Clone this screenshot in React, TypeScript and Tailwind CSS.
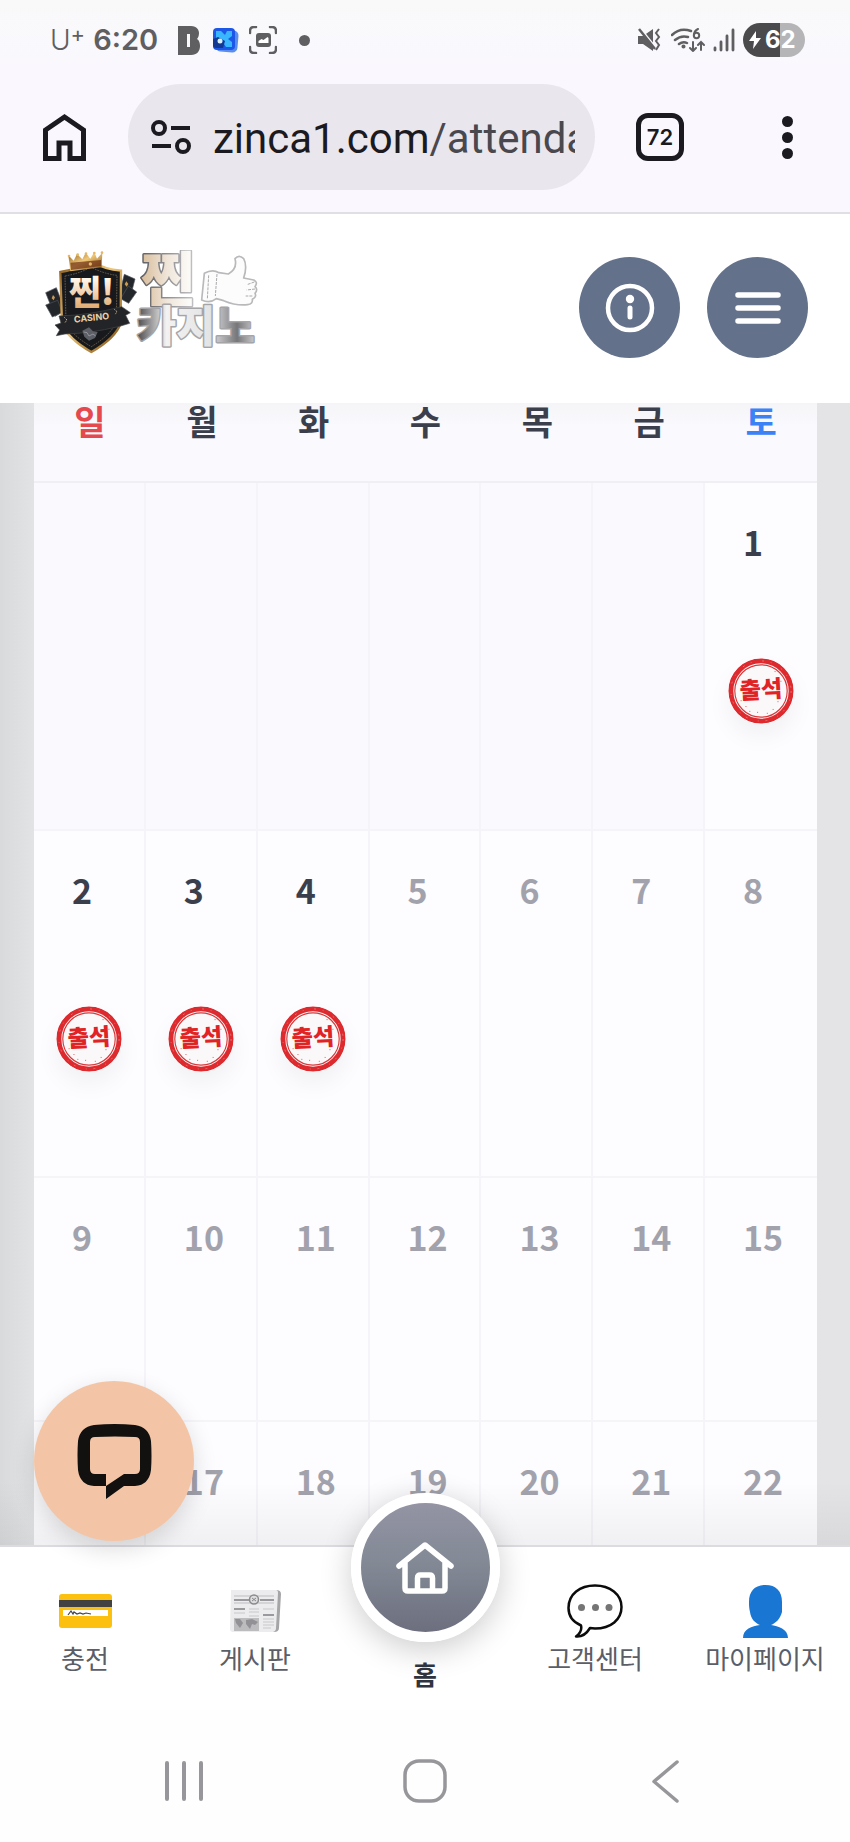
import React from 'react';

interface DayCell {
    day: number | null;
    state: 'empty' | 'past' | 'future';
    attended?: boolean;
}

interface WeekRow {
    height: string;
    days: DayCell[];
}

const WEEKDAYS = [
    { label: '일', color: 'text-[#e5484d]' },
    { label: '월', color: 'text-[#3b3f4c]' },
    { label: '화', color: 'text-[#3b3f4c]' },
    { label: '수', color: 'text-[#3b3f4c]' },
    { label: '목', color: 'text-[#3b3f4c]' },
    { label: '금', color: 'text-[#3b3f4c]' },
    { label: '토', color: 'text-[#3b82f6]' },
];

const LAST_ATTENDED = 4;

const makeWeek = (first: number, height: string): WeekRow => ({
    height,
    days: Array.from({ length: 7 }, (_, i) => {
        const day = first + i;
        if (day < 1) return { day: null, state: 'empty' };
        return { day, state: day <= LAST_ATTENDED ? 'past' : 'future', attended: day <= LAST_ATTENDED };
    }),
});

const WEEKS: WeekRow[] = [
    makeWeek(-5, 'h-[348px]'),
    makeWeek(2, 'h-[347px]'),
    makeWeek(9, 'h-[244px]'),
    makeWeek(16, 'h-[123px]'),
];

const StatusBar = () => (
    <div className="flex h-[84px] items-center justify-between pr-[45px] pb-1 pl-[50px] text-[#5f5f62]">
        <div className="flex items-center">
            <span className="font-['Inter',sans-serif] text-[28px] leading-8 font-light">U</span>
            <span className="mb-3 font-['Inter',sans-serif] text-[22px] leading-6 font-normal">+</span>
            <span className="ml-2 font-['Inter',sans-serif] text-[29px] leading-8 font-semibold">6:20</span>
            <svg className="ml-5 h-[29px] w-[22px]" viewBox="0 0 22 29" fill="currentColor" aria-hidden="true">
                <path fillRule="evenodd" d="M0 0h13c6 0 8 4 8 7 0 3-1 5-2 6 2 1 3 4 3 7 0 5-3 9-9 9H0zM9 8v13h3V8z" />
            </svg>
            <svg className="ml-3 h-[26px] w-[27px]" viewBox="0 0 27 26" aria-hidden="true">
                <rect x="4" y="3" width="22" height="22" rx="5" fill="#5b8def" transform="rotate(5 15 14)" />
                <rect x="1" y="1" width="22" height="22" rx="4" fill="#1d57e8" />
                <path d="M4 4h5l4 4 2-4h5v5l-4 3 4 3v5h-6l-4-6-6-3z" fill="#38b6ff" />
                <path d="M1 12l5-2 7 4-2 7H4q-3 0-3-3z" fill="#123a94" />
                <circle cx="8" cy="14" r="2.5" fill="#d8f1ff" />
            </svg>
            <svg className="ml-2.5 h-7 w-7" viewBox="0 0 28 28" fill="none" aria-hidden="true">
                <path d="M1 7V5q0-4 4-4h2M21 1h2q4 0 4 4v2M27 21v2q0 4-4 4h-2M7 27H5q-4 0-4-4v-2" stroke="currentColor" strokeWidth="2.5" strokeLinecap="round" />
                <rect x="7" y="7" width="15" height="14" rx="3" fill="currentColor" />
                <path d="M9.500 17v-2l3-2 2 1 4-3 1 1v5z" fill="#fff" />
            </svg>
            <span className="ml-[22px] size-[11px] rounded-full bg-[#5f5f62]" />
        </div>
        <div className="flex items-center">
            <svg className="h-6 w-6" viewBox="0 0 24 24" aria-hidden="true">
                <path d="M1 8h5l10-7v22L6 16H1z" fill="currentColor" />
                <path d="M4 1l16 20" stroke="#fafafe" strokeWidth="2" />
                <path d="M2 1l16 20" stroke="currentColor" strokeWidth="2.500" />
                <path d="M22 1l-3 4 3 4-3 4 3 4-3 5" fill="none" stroke="currentColor" strokeWidth="2" />
            </svg>
            <svg className="ml-2.5 h-6 w-[34px]" viewBox="0 0 34 24" fill="none" stroke="currentColor" strokeWidth="2.500" strokeLinecap="round" aria-hidden="true">
                <path d="M1 7Q9-1 20 3M4 12q6-5 13-3M8 16q4-3 8-1" />
                <circle cx="12.500" cy="18.500" r=".8" fill="currentColor" />
                <path d="M27 1q-4 2-4 6" strokeWidth="2" />
                <circle cx="25.500" cy="7.500" r="2.700" strokeWidth="2" />
                <path d="M22 14v9m-3-3 3 3 3-3M30 22v-8m-3 3 3-3 3 3" strokeWidth="2" />
            </svg>
            <svg className="ml-2 h-6 w-[22px]" viewBox="0 0 22 24" stroke="currentColor" strokeWidth="2.800" strokeLinecap="round" aria-hidden="true">
                <path d="M2 20v2M8 14v8M14 8v14M20 2v20" />
            </svg>
            <div className="ml-2 flex h-[34px] w-[62px] items-center overflow-hidden rounded-full bg-linear-to-r from-[#4a4a4d] from-60% to-[#b5b5b8] to-60% pl-1.5 text-white">
                <svg className="h-[18px] w-3" viewBox="0 0 12 18" fill="currentColor" aria-hidden="true"><path d="M7 0 0 10h5l-1 8 8-11H7z" /></svg>
                <span className="ml-1 font-['Inter',sans-serif] text-[24px] leading-8 font-bold">62</span>
            </div>
        </div>
    </div>
);

const BrowserBar = () => (
    <div className="flex items-center border-b-2 border-[#dfdfe4] pr-[57px] pb-[22px] pl-[43px] text-[#1b1a20]">
        <button type="button" aria-label="Home" className="shrink-0">
            <svg className="h-12 w-[43px]" viewBox="43 113 43 48" fill="none" stroke="currentColor" strokeWidth="5">
                <path d="M45.500 158.500V130L64.500 117 83.500 130v28.500H70V143H59v15.500z" />
            </svg>
        </button>
        <button type="button" className="ml-[42px] flex h-[106px] min-w-0 flex-1 items-center rounded-full bg-[#e9e7ed] pr-5 pl-[22px]">
            <svg className="h-9 w-[42px] shrink-0" viewBox="0 0 42 36" fill="none" stroke="currentColor" strokeWidth="4" aria-hidden="true">
                <circle cx="9" cy="9" r="6" />
                <circle cx="33" cy="27" r="6" />
                <path d="M21 9h19M2 27h19" />
            </svg>
            <span className="ml-[21px] min-w-0 flex-1 overflow-hidden pt-1 text-left font-['Roboto',sans-serif] text-[42px] leading-[52px] whitespace-nowrap">
                zinca1.com<span className="text-[#4a484f]">/attenda</span>
            </span>
        </button>
        <button type="button" aria-label="Tabs" className="ml-[41px] flex size-12 shrink-0 items-center justify-center rounded-xl border-[5px] border-[#1b1a20] font-['Inter',sans-serif] text-[22px] leading-6 font-semibold">
            72
        </button>
        <button type="button" aria-label="Menu" className="ml-[98px] flex shrink-0 flex-col gap-[5px]">
            <span className="size-[11px] rounded-full bg-[#1b1a20]" />
            <span className="size-[11px] rounded-full bg-[#1b1a20]" />
            <span className="size-[11px] rounded-full bg-[#1b1a20]" />
        </button>
    </div>
);

const Logo = () => (
    <svg className="h-[105px] w-[213px]" viewBox="134 120 639 315" role="img" aria-label="찐카지노">
        <defs>
            <linearGradient id="gold" x1="0" y1="0" x2="1" y2="1">
                <stop offset="0" stopColor="#8a5a1c" />
                <stop offset=".45" stopColor="#f0c878" />
                <stop offset="1" stopColor="#7a4a10" />
            </linearGradient>
            <linearGradient id="cream" x1="0" y1="0" x2="0" y2="1">
                <stop offset=".3" stopColor="#fff6ea" />
                <stop offset="1" stopColor="#d99a55" />
            </linearGradient>
            <linearGradient id="sand" x1="0" y1="0" x2="1" y2="0">
                <stop offset="0" stopColor="#d8bd9b" />
                <stop offset=".5" stopColor="#f0e6da" />
                <stop offset="1" stopColor="#fff" />
            </linearGradient>
            <linearGradient id="steel" x1="0" y1="0" x2="1" y2="0">
                <stop offset="0" stopColor="#4b4b4e" />
                <stop offset=".25" stopColor="#f2f2f2" />
                <stop offset=".62" stopColor="#e4e4e4" />
                <stop offset=".85" stopColor="#77777a" />
                <stop offset="1" stopColor="#c9c9cb" />
            </linearGradient>
            <linearGradient id="edge" x1="0" y1="0" x2="1" y2="0">
                <stop offset="0" stopColor="#5f5f63" />
                <stop offset="1" stopColor="#c4c4c8" />
            </linearGradient>
        </defs>
        {/* cards behind the shield */}
        <g fill="#23272b" stroke="#50555a" strokeWidth="2">
            <path d="M136 248l32-15 26 68-30 18z" />
            <path d="M136 285l36-14 14 36-30 14z" />
            <path d="M372 193l32 14-16 62-32-12z" />
            <path d="M384 228l25 18-24 34-24-14z" />
        </g>
        <path d="M158 255l6 7-4 9-6-6zM378 214l6 8-5 8-6-7z" fill="#c99a52" />
        <path d="M180 186q50-7 92-32 42 25 90 28l-1 158q-16 45-88 86-70-40-88-84z" fill="#17191c" stroke="url(#gold)" strokeWidth="7" />
        <path d="M194 198q46-8 78-27 36 20 78 25l-2 140q-16 38-75 74-60-35-76-72z" fill="none" stroke="#8f7c5d" strokeWidth="2" strokeDasharray="5 3" />
        <path d="M204 136l16 16 10-20 16 16 10-20 14 18 12-20 8 20 16-18-2 44-94 12z" fill="url(#gold)" />
        <path d="M210 158l92-8v18l-90 12z" fill="#6e2f12" opacity=".7" />
        <g fill="#e3b765"><circle cx="206" cy="138" r="4" /><circle cx="232" cy="134" r="4" /><circle cx="257" cy="131" r="4" /><circle cx="282" cy="129" r="4" /><circle cx="305" cy="128" r="4" /><circle cx="270" cy="162" r="5" /></g>
        <text x="206" y="284" fontFamily="'Noto Sans CJK KR', sans-serif" fontWeight="900" fontSize="104" fill="url(#cream)">찐!</text>
        <path d="M176 318q90-2 188-28l26 18-14 8 12 24-34 10q-84 20-160 22l-26 5 10-17-14-15 18-6z" fill="#222427" stroke="#44474a" strokeWidth="2" />
        <text x="222" y="338" transform="rotate(-6 222 338)" fontFamily="'Inter', sans-serif" fontWeight="700" fontSize="27" fill="#e9cfa5">CASINO</text>
        <path d="M192 322l8 8-7 9M342 298l8 7-6 9" fill="none" stroke="#d3b68c" strokeWidth="3" strokeDasharray="4 3" />
        <path d="M246 362l20-10 12 12 14 2-8 18-18 8-14-12z" fill="#5d6066" />
        <path d="M250 366l10 2 6 10 12-6 8 6" fill="none" stroke="#a9adb3" strokeWidth="2" />

        <g fontFamily="'Noto Sans CJK KR', sans-serif" fontWeight="900" strokeLinejoin="round" paintOrder="stroke">
            <text x="422" y="274" fontSize="176" fill="url(#sand)" stroke="url(#edge)" strokeWidth="9">찐</text>
            <text x="410" y="397" fontSize="128" fill="url(#steel)" stroke="#a5a5a8" strokeWidth="9">카지노</text>
        </g>
        <path d="M612 190q24-14 44-2l28 4q28-16 20-46 12-14 26 0 12 22 0 58l30 6q14 6 4 20 10 8 0 20 6 10-8 18 2 14-14 16-34 4-72-12l-22-6q-20 16-44 4z" fill="#fcfcfc" stroke="#b9b9bc" strokeWidth="5" strokeLinejoin="round" />
        <path d="M625 196l-4 72M650 192l-5 66M762 216l-22 8M764 237l-25 3M756 258l-20 0" fill="none" stroke="#aaaaad" strokeWidth="3" strokeDasharray="9 3" />
    </svg>
);

const SiteHeader = () => (
    <header className="flex h-[189px] items-center justify-between bg-white pr-[42px] pb-0.5 pl-[45px]">
        <a href="#home" className="mb-2.5 block"><Logo /></a>
        <div className="flex gap-[27px]">
            <button type="button" aria-label="안내" className="flex size-[101px] items-center justify-center rounded-full bg-[#64718a] text-white">
                <svg className="size-[50px]" viewBox="0 0 50 50" fill="none" stroke="currentColor" strokeLinecap="round">
                    <circle cx="25" cy="25" r="22" strokeWidth="4.500" />
                    <circle cx="25" cy="16" r="4.200" fill="currentColor" stroke="none" />
                    <path d="M25 25v9" strokeWidth="5" />
                </svg>
            </button>
            <button type="button" aria-label="메뉴" className="flex size-[101px] items-center justify-center rounded-full bg-[#64718a] text-white">
                <svg className="h-8 w-[46px]" viewBox="0 0 46 32" stroke="currentColor" strokeWidth="5.500" strokeLinecap="round">
                    <path d="M3 3h40M3 16h40M3 29h40" />
                </svg>
            </button>
        </div>
    </header>
);

const Stamp = () => (
    <svg className="size-[66px] rounded-full shadow-[0_12px_24px_rgba(0,0,0,0.05)]" viewBox="0 0 68 68" role="img" aria-label="출석">
        <circle cx="34" cy="34" r="31" fill="#faf8f8" stroke="#dc2a2e" strokeWidth="5" />
        <circle cx="34" cy="34" r="31" fill="none" stroke="#ec7476" strokeWidth="1" strokeDasharray="2 7 1 11" />
        <circle cx="34" cy="34" r="27" fill="none" stroke="#d9383b" strokeWidth="1.200" />
        <path d="M48 14h1M54 24h1M13 44h1M18 50h1M30 56h1M46 53h1M51 45h1M22 55h1M40 57h1" stroke="#e25a5c" strokeWidth="1" />
        <text x="34" y="41" textAnchor="middle" transform="rotate(-3 34 34)" fontFamily="'Noto Sans CJK KR', sans-serif" fontWeight="900" fontSize="24" fill="#e02426">출석</text>
    </svg>
);

const AttendanceCalendar = () => (
    <main className="relative bg-linear-to-r from-[#d8dadc] via-[#e2e3e5] via-4% to-[#e4e4e7] pr-[33px] pl-[34px]">
        <table className="w-full table-fixed border-separate border-spacing-0 bg-[#fdfcfe]">
            <thead>
                <tr className="h-[79px] bg-linear-to-b from-[#f5f5f8] to-[#fafafe] to-30%">
                    {WEEKDAYS.map(w => (
                        <th key={w.label} scope="col" className={`border-b-2 border-[#f0f0f4] pb-[42px] text-center text-[34px] leading-9 font-bold ${w.color}`}>
                            {w.label}
                        </th>
                    ))}
                </tr>
            </thead>
            <tbody>
                {WEEKS.map((week, wi) => (
                    <tr key={wi} className={week.height}>
                        {week.days.map((cell, di) => (
                            <td
                                key={di}
                                className={`border-[#f5f4f8] p-0 align-top ${di < 6 ? 'border-r-2' : ''} ${wi < 3 ? 'border-b-2' : ''} ${cell.state === 'empty' ? 'bg-[#faf9fd]' : ''}`}
                            >
                                {cell.day !== null && (
                                    <div className={`pt-[37px] pl-[38px] text-[34px] leading-[44px] font-bold ${cell.state === 'past' ? 'text-[#3b3f4c]' : 'text-[#a2a2ad]'}`}>
                                        {cell.day}
                                    </div>
                                )}
                                {cell.attended && (
                                    <div className="mt-[94px] flex justify-center">
                                        <Stamp />
                                    </div>
                                )}
                            </td>
                        ))}
                    </tr>
                ))}
            </tbody>
        </table>
        <div className="pointer-events-none absolute inset-x-0 bottom-0 h-16 bg-linear-to-t from-black/5 to-transparent" />
        <button type="button" aria-label="채팅 상담" className="absolute bottom-[4px] left-[34px] z-20 flex size-[160px] items-center justify-center rounded-full bg-[#f3c5a6] shadow-[0_8px_24px_rgba(0,0,0,0.14)]">
            <svg className="h-[75px] w-[75px]" viewBox="0 0 75 75" fill="#12110f">
                <path fillRule="evenodd" d="M17 1q21-2 41 0 14 2 16 16 1 15 0 29-2 15-16 16H47L29 75V62H17Q3 61 1 46 0 31 1 17 3 3 17 1zm1 12q-5 0-5 5v27q0 5 5 5h11v12l18-12h11q5 0 5-5V18q0-5-5-5-20-1-40 0z" />
            </svg>
        </button>
    </main>
);

const CardIcon = () => (
    <svg className="h-[34px] w-[53px]" viewBox="0 0 53 34" aria-hidden="true">
        <rect width="53" height="34" rx="3" fill="#fbc010" />
        <path d="M0 6h53v7H0z" fill="#424242" />
        <path d="M4 16h45v6H4z" fill="#fff" />
        <path d="M9 21l3-4 2 3 1-2 3 2 3-1 3 1 3-1 5 1" fill="none" stroke="#444" strokeWidth="1.200" />
    </svg>
);

const NewsIcon = () => (
    <svg className="h-[42px] w-[51px]" viewBox="0 0 51 42" aria-hidden="true">
        <path d="M46 0q5 0 5 4l-2 34q0 4-5 4h-6V0z" fill="#a5a5a8" />
        <path d="M1 0h45q2 0 2 3l-2 35q0 3-3 4H3q-3 0-3-3z" fill="#ececee" />
        <path d="M4 6h40M4 13h40" stroke="#bdbdc0" strokeWidth="1" />
        <path d="M4 10h15M30 10h14M4 19h11M33 25h11" stroke="#9a9a9e" strokeWidth="2" />
        <circle cx="24" cy="9.500" r="4.500" fill="#ddd" stroke="#8a8a8e" strokeWidth="1.500" />
        <path d="M22 8l4 3m0-3-4 3" stroke="#8a8a8e" />
        <path d="M4 23h11M19 19h10M19 22h10M19 26h10M33 19h11M33 29h11M33 32h11M33 35h11M33 38h8" stroke="#c8c8cb" />
        <path d="M4 28h25v13H4z" fill="#bcbcbf" />
        <path d="M5 29l5 0 3 4-3 5-4-5zM16 30l6-1 6 3-3 3-3-1-2 5-4-5z" fill="#929296" />
    </svg>
);

const ChatIcon = () => (
    <svg className="h-[54px] w-[56px]" viewBox="0 0 56 54" aria-hidden="true">
        <path d="M28 1.500c15 0 26.500 9 26.500 21.500S44 44.500 28 44.500l-5-.500c-3 5-8 9-14 8.500 4-3 6-7 5-11C6 38 1.500 32 1.500 24 1.500 10 13 1.500 28 1.500z" fill="#fff" stroke="#0b0b0b" strokeWidth="2.500" strokeLinejoin="round" />
        <g fill="#757575"><circle cx="14.500" cy="23.500" r="3.500" /><circle cx="28.500" cy="23.500" r="3.500" /><circle cx="42" cy="23.500" r="3.500" /></g>
    </svg>
);

const PersonIcon = () => (
    <svg className="h-[53px] w-[45px]" viewBox="0 0 45 53" fill="#1976d2" aria-hidden="true">
        <path d="M22.500 0C33 0 39 6 39 17v10c-2 7-6 11-11 13 7 1 17 4 17 13H0c0-9 9-12 17-13C12 38 8 34 7 27c-1-4-1-7-1-10C6 6 12 0 22.500 0z" />
    </svg>
);

const NavItem = ({ icon, label, href }: { icon: React.ReactNode; label: string; href: string }) => (
    <a href={href} className="flex min-w-0 flex-1 flex-col items-center pt-[37px]">
        <span className="flex h-[54px] items-center">{icon}</span>
        <span className="mt-0.5 text-[26px] leading-9 whitespace-nowrap text-[#5b5e66]">{label}</span>
    </a>
);

const BottomNav = () => (
    <nav className="relative z-10 flex h-[165px] border-t-2 border-[#dcdce0] bg-white">
        <NavItem href="#charge" label="충전" icon={<CardIcon />} />
        <NavItem href="#board" label="게시판" icon={<NewsIcon />} />
        <a href="#home" className="-mt-[54px] flex flex-1 flex-col items-center">
            <span className="flex size-[149px] items-center justify-center rounded-full border-10 border-white bg-linear-to-b from-[#9796a6] via-[#818894] to-[#6a6b7b] bg-origin-border shadow-[0_8px_32px_rgba(0,0,0,0.2)]">
                <svg className="h-[52px] w-[58px]" viewBox="0 0 58 52" fill="none" stroke="#fff" strokeWidth="5.500" strokeLinejoin="round" strokeLinecap="round" aria-hidden="true">
                    <path d="M3 24L29 3l26 21M9 20v26q0 3 3 3h34q3 0 3-3V20M21.500 48V36q0-3 3-3h9q3 0 3 3v12" />
                </svg>
            </span>
            <span className="mt-3.5 text-[26px] leading-9 font-bold text-[#2e3440]">홈</span>
        </a>
        <NavItem href="#support" label="고객센터" icon={<ChatIcon />} />
        <NavItem href="#mypage" label="마이페이지" icon={<PersonIcon />} />
    </nav>
);

const SystemNav = () => (
    <div className="grid h-[132px] grid-cols-3 place-items-center bg-[#fefefe] px-16 pt-2.5 text-[#97969a]">
        <button type="button" aria-label="Recents">
            <svg className="h-[42px] w-[38px]" viewBox="0 0 38 42" stroke="currentColor" strokeWidth="4" strokeLinecap="round"><path d="M2 3v36M19 3v36M36 3v36" /></svg>
        </button>
        <button type="button" aria-label="Home">
            <svg className="size-[44px]" viewBox="0 0 44 44" fill="none" stroke="currentColor" strokeWidth="3.500"><rect x="2" y="2" width="40" height="40" rx="14" /></svg>
        </button>
        <button type="button" aria-label="Back">
            <svg className="h-[43px] w-[27px]" viewBox="0 0 27 43" fill="none" stroke="currentColor" strokeWidth="3.500" strokeLinecap="round" strokeLinejoin="round"><path d="M25 2L2 21.500 25 41" /></svg>
        </button>
    </div>
);

export default function App() {
    return (
        <div className="w-full overflow-hidden bg-white font-['Noto_Sans_CJK_KR',sans-serif]">
            <div className="bg-linear-to-b from-[#f9f9f9] to-[#faf8fe] to-30%">
                <StatusBar />
                <BrowserBar />
            </div>
            <SiteHeader />
            <AttendanceCalendar />
            <BottomNav />
            <SystemNav />
        </div>
    );
}
